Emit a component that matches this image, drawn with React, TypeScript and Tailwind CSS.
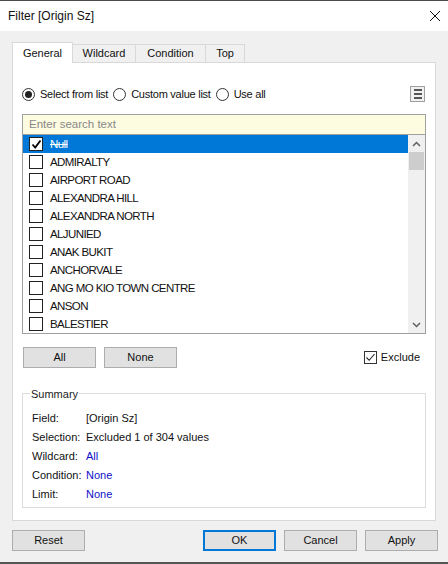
import React from 'react';

const items = [
  'ADMIRALTY',
  'AIRPORT ROAD',
  'ALEXANDRA HILL',
  'ALEXANDRA NORTH',
  'ALJUNIED',
  'ANAK BUKIT',
  'ANCHORVALE',
  'ANG MO KIO TOWN CENTRE',
  'ANSON',
  'BALESTIER',
];

const tabs = [
  { label: 'General', w: 'w-[61px]' },
  { label: 'Wildcard', w: 'w-[63px]' },
  { label: 'Condition', w: 'w-[70px]' },
  { label: 'Top', w: 'w-[39px]' },
];

const Radio = ({ checked, label }: { checked?: boolean; label: string }) => (
  <div className="flex items-center">
    <div className="w-[13px] h-[13px] rounded-full border border-[#333] bg-white flex items-center justify-center">
      {checked && <div className="w-[7px] h-[7px] rounded-full bg-[#222]" />}
    </div>
    <span className="ml-[5px] mr-[5px] tracking-[-0.25px]">{label}</span>
  </div>
);

const Button = ({ label, primary }: { label: string; primary?: boolean }) => (
  <button
    className={
      'w-[73px] h-[21px] bg-[#e1e1e1] text-[11px] text-[#111] flex items-center justify-center ' +
      (primary ? 'border-2 border-[#0078d7]' : 'border border-[#adadad]')
    }
  >
    {label}
  </button>
);

const SummaryRow = ({ label, value, link }: { label: string; value: string; link?: boolean }) => (
  <div className="flex h-[19px] items-center">
    <span className="w-[54px]">{label}</span>
    <span className={link ? 'text-[#1010c8]' : 'text-[#111]'}>{value}</span>
  </div>
);

export default function App() {
  return (
    <div className="w-[448px] h-[564px] bg-[#f0f0f0] flex flex-col text-[11px] text-[#111] font-['Liberation_Sans',sans-serif] border-t border-t-[#4a4a4a] border-b-2 border-b-[#555]">
      {/* Title bar */}
      <div className="h-[30px] bg-white flex items-center justify-between pl-[8px] pr-[7px] shrink-0">
        <span className="text-[12px]">Filter [Origin Sz]</span>
        <svg width="12" height="12" viewBox="0 0 12 12">
          <path d="M1 1L11 11M11 1L1 11" stroke="#111" strokeWidth="1" />
        </svg>
      </div>

      <div className="px-[12px] pt-[11px] flex flex-col">
        {/* Tabs */}
        <div className="flex items-end h-[20px] relative z-10">
          {tabs.map((t, i) => (
            <div
              key={t.label}
              className={
                t.w +
                ' flex items-center justify-center border-[#d9d9d9] ' +
                (i === 0
                  ? 'h-[21px] bg-white border-l border-t border-r -mb-[1px]'
                  : 'h-[18px] bg-[#f0f0f0] border-t border-r')
              }
            >
              {t.label}
            </div>
          ))}
        </div>

        {/* Panel */}
        <div className="w-[424px] h-[459px] bg-white border border-[#d9d9d9] pl-[9px] pr-[9px] flex flex-col">
          <div className="mt-[23px] h-[16px] flex items-center">
            <Radio checked label="Select from list" />
            <Radio label="Custom value list" />
            <Radio label="Use all" />
            <div className="ml-auto mr-[1px] w-[15px] h-[16px] border border-[#a0a0a0] bg-[#f0f0f0] flex flex-col items-center justify-center gap-[2px]">
              <div className="w-[8px] h-[2px] bg-[#555]" />
              <div className="w-[8px] h-[2px] bg-[#555]" />
              <div className="w-[8px] h-[2px] bg-[#555]" />
            </div>
          </div>

          {/* Search + list */}
          <div className="mt-[12px] w-[404px] border border-[#a0a0a0]">
            <div className="h-[20px] bg-[#fdfbe0] border-b border-[#a0a0a0] flex items-center pl-[6px] text-[#888] text-[11.5px]">
              Enter search text
            </div>
            <div className="flex h-[198px]">
              <div className="flex-1 flex flex-col text-[11.5px] tracking-[-0.6px]">
                <div className="h-[18px] bg-[#0078d7] flex items-center pl-[6px]">
                  <div className="w-[14px] h-[14px] bg-white border border-[#222] flex items-center justify-center">
                    <svg width="11" height="11" viewBox="0 0 11 11">
                      <path d="M1.5 5.5L4.2 8.5L9.5 1.5" fill="none" stroke="#000" strokeWidth="1.8" />
                    </svg>
                  </div>
                  <span className="ml-[7px] pt-[2px] text-white line-through">Null</span>
                </div>
                {items.map((it) => (
                  <div key={it} className="h-[18px] flex items-center pl-[6px]">
                    <div className="w-[14px] h-[14px] bg-white border border-[#222]" />
                    <span className="ml-[7px] pt-[1px]">{it}</span>
                  </div>
                ))}
              </div>
              {/* Scrollbar */}
              <div className="w-[17px] bg-[#f0f0f0] flex flex-col">
                <div className="h-[17px] flex items-center justify-center">
                  <svg width="9" height="6" viewBox="0 0 9 6">
                    <path d="M1 5L4.5 1.5L8 5" fill="none" stroke="#606060" strokeWidth="1.5" />
                  </svg>
                </div>
                <div className="mx-[1px] h-[18px] bg-[#cdcdcd]" />
                <div className="flex-1" />
                <div className="h-[17px] flex items-center justify-center">
                  <svg width="9" height="6" viewBox="0 0 9 6">
                    <path d="M1 1L4.5 4.5L8 1" fill="none" stroke="#606060" strokeWidth="1.5" />
                  </svg>
                </div>
              </div>
            </div>
          </div>

          {/* All / None / Exclude */}
          <div className="mt-[13px] flex items-center">
            <div className="ml-[1px] flex gap-[8px]">
              <Button label="All" />
              <Button label="None" />
            </div>
            <div className="ml-auto mr-[6px] flex items-center">
              <div className="w-[13px] h-[13px] border border-[#333] bg-white flex items-center justify-center">
                <svg width="11" height="11" viewBox="0 0 11 11">
                  <path d="M1.5 5.5L4.2 8.3L9.5 2" fill="none" stroke="#222" strokeWidth="1.1" />
                </svg>
              </div>
              <span className="ml-[4px]">Exclude</span>
            </div>
          </div>

          {/* Summary */}
          <div className="relative mt-[25px] w-[404px] h-[115px] border border-[#dcdcdc] pt-[15px] pl-[9px] text-[11px]">
            <span className="absolute -top-[8px] left-[7px] bg-white px-[1px] text-[#222]">Summary</span>
            <SummaryRow label="Field:" value="[Origin Sz]" />
            <SummaryRow label="Selection:" value="Excluded 1 of 304 values" />
            <SummaryRow label="Wildcard:" value="All" link />
            <SummaryRow label="Condition:" value="None" link />
            <SummaryRow label="Limit:" value="None" link />
          </div>
        </div>

        {/* Footer buttons */}
        <div className="mt-[9px] flex items-center">
          <Button label="Reset" />
          <div className="ml-auto flex gap-[8px] -mr-[2px]">
            <Button label="OK" primary />
            <Button label="Cancel" />
            <Button label="Apply" />
          </div>
        </div>
      </div>
    </div>
  );
}
